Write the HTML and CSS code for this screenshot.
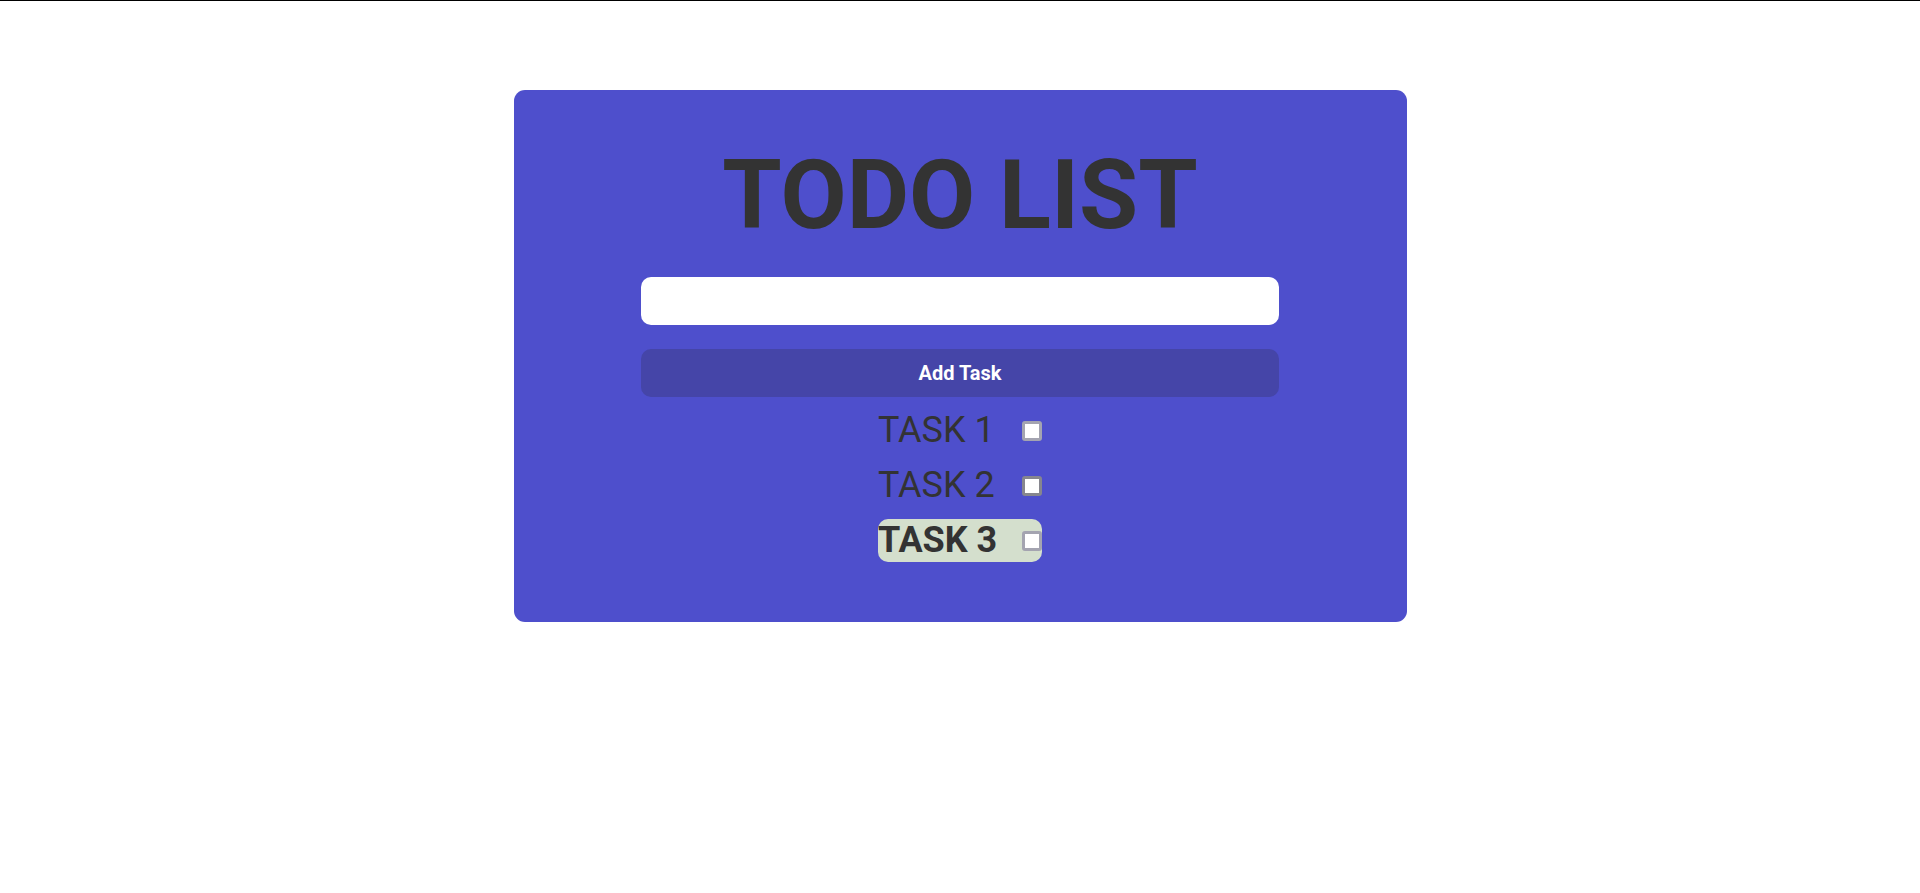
FILE: index.html
```html
<!DOCTYPE html>
<html lang="en">
<head>
<meta charset="utf-8">
<title>Todo List</title>
<link rel="stylesheet" href="styles.css">
</head>
<body>
<main class="card">
  <h1 class="title">TODO LIST</h1>
  <input class="task-input" type="text" aria-label="New task">
  <button class="add-btn" type="button">Add Task</button>
  <ul class="tasks">
    <li class="task"><span class="task-name">TASK 1</span><input class="check" type="checkbox"></li>
    <li class="task"><span class="task-name">TASK 2</span><input class="check check-hover" type="checkbox"></li>
    <li class="task task-active"><span class="task-name">TASK 3</span><input class="check" type="checkbox"></li>
  </ul>
</main>
</body>
</html>
```

FILE: styles.css
```css
html, body {
  margin: 0;
  padding: 0;
  background: #ffffff;
}

body {
  border-top: 1px solid #000000;
  font-family: Roboto, "Liberation Sans", sans-serif;
  color: #333333;
}

.card {
  width: 893px;
  margin: 89px auto 0;
  padding: 49px 0 60px;
  box-sizing: border-box;
  background: #4e4fcc;
  border-radius: 11px;
  display: flex;
  flex-direction: column;
  align-items: center;
}

.title {
  margin: 0;
  font-size: 96px;
  line-height: 113px;
  font-weight: 700;
  color: #333333;
  text-align: center;
}

.task-input {
  display: block;
  width: 638px;
  height: 48px;
  margin-top: 25px;
  border: none;
  border-radius: 10px;
  background: #ffffff;
  box-sizing: border-box;
  padding: 0 12px;
  font-family: Roboto, sans-serif;
  font-size: 18px;
  outline: none;
}

.add-btn {
  display: block;
  width: 638px;
  height: 48px;
  margin-top: 24px;
  border: none;
  border-radius: 10px;
  background: #4545a8;
  color: #ffffff;
  font-family: Roboto, sans-serif;
  font-size: 20px;
  font-weight: 700;
  cursor: pointer;
}

.tasks {
  list-style: none;
  margin: 12px 0 0;
  padding: 0;
  width: 164px;
  display: flex;
  flex-direction: column;
  gap: 12px;
}

.task {
  height: 43px;
  display: flex;
  align-items: center;
  justify-content: space-between;
  border-radius: 10px;
}

.task-name {
  font-size: 36px;
  line-height: 43px;
  font-weight: 400;
  color: #333333;
}

.task-active {
  background: #d4dfcd;
}

.task-active .task-name {
  font-weight: 700;
}

.check {
  appearance: none;
  -webkit-appearance: none;
  margin: 0;
  width: 20px;
  height: 20px;
  box-sizing: border-box;
  border: 3px solid #a4a4b0;
  border-radius: 3px;
  background: #ffffff;
}

.check-hover {
  border-color: #86868e;
}
```
